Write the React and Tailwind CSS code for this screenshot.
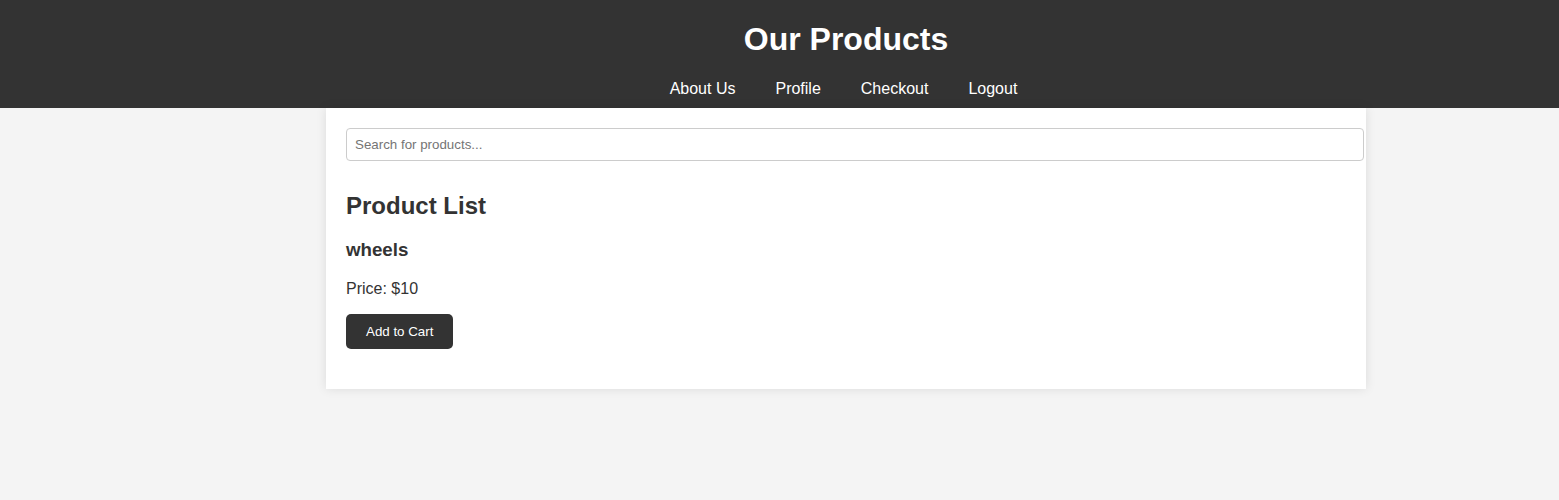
import React, { useState } from 'react';

const navLinks = ['About Us', 'Profile', 'Checkout', 'Logout'];

const products = [{ id: 1, name: 'wheels', price: 10 }];

const App = () => {
  const [query, setQuery] = useState('');

  const visible = products.filter((p) =>
    p.name.toLowerCase().includes(query.toLowerCase())
  );

  return (
    <div className="min-h-[500px] bg-[#f4f4f4] font-['Liberation_Sans',Arial,sans-serif] text-[#333]">
      {/* Header */}
      <header className="bg-[#333] pt-[21px] pb-[10px] text-white">
        <div className="ml-[326px] w-[1040px] text-center">
          <h1 className="text-[32px] font-bold leading-[37px]">Our Products</h1>
          <nav className="mt-[22px] flex justify-center gap-[40px] pr-[5px] text-[16px] leading-[18px]">
            {navLinks.map((link) => (
              <a key={link} href="#" className="text-white">
                {link}
              </a>
            ))}
          </nav>
        </div>
      </header>

      {/* Main */}
      <main className="ml-[326px] w-[1040px] bg-white px-[20px] pt-[20px] pb-[40px] shadow-[0_0_10px_rgba(0,0,0,0.1)]">
        <input
          type="text"
          value={query}
          onChange={(e) => setQuery(e.target.value)}
          placeholder="Search for products..."
          className="block h-[33px] w-[1018px] rounded-[4px] border border-[#ccc] px-[8px] text-[13.33px] text-[#333] placeholder:text-[#757575] outline-none"
        />

        <h2 className="mt-[31px] text-[24px] font-bold leading-[28px]">Product List</h2>

        {visible.map((product) => (
          <div key={product.id}>
            <h3 className="mt-[19px] text-[18.72px] font-bold leading-[22px]">{product.name}</h3>
            <p className="mt-[19px] text-[16px] leading-[18px]">Price: ${product.price}</p>
            <button className="mt-[16px] h-[35px] rounded-[5px] bg-[#333] px-[20px] text-[13.33px] text-white">
              Add to Cart
            </button>
          </div>
        ))}
      </main>
    </div>
  );
};

export default App;
